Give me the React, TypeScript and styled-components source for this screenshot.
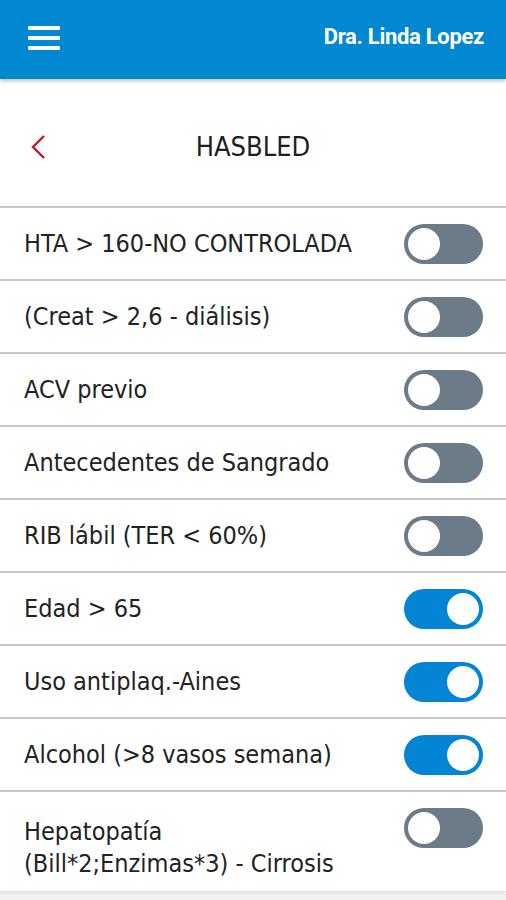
import React, { useState } from 'react';
import styled, { createGlobalStyle } from 'styled-components';

const GlobalStyle = createGlobalStyle`
  html, body {
    margin: 0;
    padding: 0;
    background: #ffffff;
  }
  body {
    font-family: 'DejaVu Sans Condensed', 'DejaVu Sans', sans-serif;
  }
`;

const Page = styled.div`
  width: 506px;
  height: 900px;
  display: flex;
  flex-direction: column;
  overflow: hidden;
  background: #f2f2f2;
`;

const TopBar = styled.header`
  height: 79px;
  flex-shrink: 0;
  background: #0288d1;
  display: flex;
  align-items: center;
  justify-content: space-between;
  padding: 0 22px 0 28px;
  box-shadow: 0 2px 4px rgba(0, 0, 0, 0.25);
  position: relative;
  z-index: 2;
`;

const MenuButton = styled.button`
  border: 0;
  background: transparent;
  padding: 0;
  width: 32px;
  height: 24px;
  display: flex;
  flex-direction: column;
  justify-content: space-between;
  cursor: pointer;
  margin-top: -4px;
`;

const MenuBar = styled.span`
  display: block;
  height: 4px;
  border-radius: 1px;
  background: #ffffff;
`;

const UserName = styled.span`
  font-family: Roboto, 'Liberation Sans', sans-serif;
  font-weight: 700;
  font-size: 22px;
  letter-spacing: -0.3px;
  color: #ffffff;
  margin-top: -6px;
`;

const Content = styled.main`
  background: #ffffff;
  display: flex;
  flex-direction: column;
  box-shadow: 0 2px 4px rgba(0, 0, 0, 0.08);
`;

const TitleRow = styled.div`
  height: 129px;
  display: grid;
  grid-template-columns: 60px 1fr 60px;
  align-items: center;
  border-bottom: 2px solid #c8c8c8;
  padding-top: 8px;
  box-sizing: border-box;
`;

const BackButton = styled.button`
  border: 0;
  background: transparent;
  padding: 0 0 0 30px;
  display: flex;
  align-items: center;
  cursor: pointer;
`;

const Title = styled.h1`
  margin: 0;
  text-align: center;
  font-weight: 400;
  font-size: 27px;
  color: #1e1e1e;
`;

const Row = styled.label<{ $tall?: boolean }>`
  height: ${({ $tall }) => ($tall ? '99px' : '73px')};
  box-sizing: border-box;
  display: flex;
  align-items: ${({ $tall }) => ($tall ? 'flex-start' : 'center')};
  justify-content: space-between;
  padding: ${({ $tall }) => ($tall ? '16px 23px 0 24px' : '0 23px 0 24px')};
  border-bottom: ${({ $tall }) => ($tall ? '0' : '2px solid #c8c8c8')};
  cursor: pointer;
`;

const Label = styled.span<{ $tall?: boolean }>`
  font-size: 25px;
  line-height: 32px;
  color: #222222;
  padding-top: ${({ $tall }) => ($tall ? '8px' : '0')};
`;

const Track = styled.span<{ $on: boolean }>`
  width: 79px;
  height: 40px;
  flex-shrink: 0;
  border-radius: 20px;
  background: ${({ $on }) => ($on ? '#0384d4' : '#6b7b87')};
  display: flex;
  align-items: center;
  justify-content: ${({ $on }) => ($on ? 'flex-end' : 'flex-start')};
  padding: 0 4px;
  box-sizing: border-box;
`;

const Knob = styled.span`
  width: 32px;
  height: 32px;
  border-radius: 50%;
  background: #ffffff;
`;

const items = [
  { text: 'HTA > 160-NO CONTROLADA', on: false },
  { text: '(Creat > 2,6 - diálisis)', on: false },
  { text: 'ACV previo', on: false },
  { text: 'Antecedentes de Sangrado', on: false },
  { text: 'RIB lábil (TER < 60%)', on: false },
  { text: 'Edad > 65', on: true },
  { text: 'Uso antiplaq.-Aines', on: true },
  { text: 'Alcohol (>8 vasos semana)', on: true },
  { text: 'Hepatopatía\n(Bill*2;Enzimas*3) - Cirrosis', on: false, tall: true },
];

export default function App(): React.JSX.Element {
  const [values, setValues] = useState<boolean[]>(items.map((i) => i.on));

  const toggle = (idx: number) => {
    setValues((cur) => cur.map((v, i) => (i === idx ? !v : v)));
  };

  return (
    <Page>
      <GlobalStyle />
      <TopBar>
        <MenuButton aria-label="menu">
          <MenuBar />
          <MenuBar />
          <MenuBar />
        </MenuButton>
        <UserName>Dra. Linda Lopez</UserName>
      </TopBar>
      <Content>
        <TitleRow>
          <BackButton aria-label="volver">
            <svg width="16" height="26" viewBox="0 0 16 26">
              <path d="M14 2 L3 13 L14 24" fill="none" stroke="#c4172c" strokeWidth="2.4" />
            </svg>
          </BackButton>
          <Title>HASBLED</Title>
          <span />
        </TitleRow>
        {items.map((item, idx) => (
          <Row key={idx} $tall={item.tall} onClick={() => toggle(idx)}>
            <Label $tall={item.tall}>
              {item.text.split('\n').map((line, j) => (
                <React.Fragment key={j}>
                  {j > 0 && <br />}
                  {line}
                </React.Fragment>
              ))}
            </Label>
            <Track $on={values[idx]}>
              <Knob />
            </Track>
          </Row>
        ))}
      </Content>
    </Page>
  );
}
